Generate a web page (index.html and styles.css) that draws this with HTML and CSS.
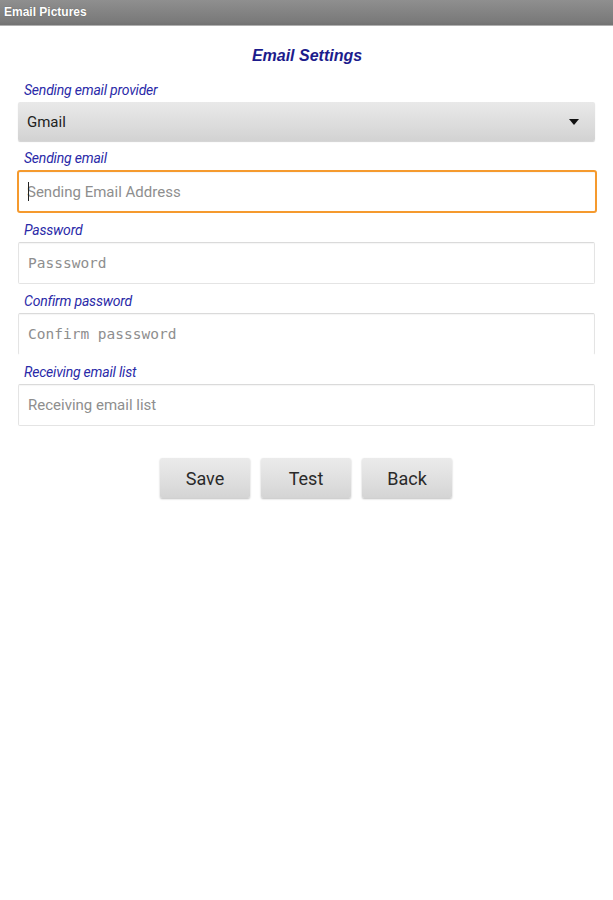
FILE: index.html
```html
<!DOCTYPE html>
<html>
<head>
<meta charset="utf-8">
<title>Email Pictures</title>
<link rel="stylesheet" href="styles.css">
</head>
<body>
<div class="titlebar">Email Pictures</div>
<main class="form">
  <h1 class="heading">Email Settings</h1>

  <div class="field">
    <div class="label">Sending email provider</div>
    <div class="spinner">
      <span class="spinner-text">Gmail</span>
      <svg class="arrow" width="10" height="6" viewBox="0 0 10 6"><path d="M0 0 H10 L5 6 Z" fill="#111"/></svg>
    </div>
  </div>

  <div class="field">
    <div class="label">Sending email</div>
    <div class="input focused">
      <span class="caret"></span>
      <span class="placeholder">Sending Email Address</span>
    </div>
  </div>

  <div class="field">
    <div class="label">Password</div>
    <div class="input"><span class="placeholder mono">Passsword</span></div>
  </div>

  <div class="field">
    <div class="label">Confirm password</div>
    <div class="input open-bottom"><span class="placeholder mono">Confirm passsword</span></div>
  </div>

  <div class="field">
    <div class="label">Receiving email list</div>
    <div class="input"><span class="placeholder">Receiving email list</span></div>
  </div>

  <div class="buttons">
    <button class="btn">Save</button>
    <button class="btn">Test</button>
    <button class="btn">Back</button>
  </div>
</main>
</body>
</html>
```
FILE: styles.css
```css
* { box-sizing: border-box; }
html, body { margin: 0; padding: 0; background: #fff; }
body { width: 613px; height: 900px; font-family: Roboto, "Liberation Sans", sans-serif; }

.titlebar {
  height: 26px;
  background: linear-gradient(#8f8f8f, #7a7a7a 85%, #727272);
  border-bottom: 1px solid #b0b0b0;
  color: #fff;
  font-family: "Liberation Sans", Arial, sans-serif;
  font-weight: bold;
  font-size: 12px;
  line-height: 25px;
  padding-left: 4px;
  text-shadow: 0 0 1px #555;
}

.form {
  padding: 0 16px 0 17px;
  display: flex;
  flex-direction: column;
}

.heading {
  margin: 20px 0 0 0;
  text-align: center;
  font-family: "Liberation Sans", Arial, sans-serif;
  font-weight: bold;
  font-style: italic;
  font-size: 16px;
  line-height: 20px;
  color: #1c1c8c;
}

.field { display: flex; flex-direction: column; }

.label {
  font-style: italic;
  font-size: 14px;
  line-height: 18px;
  color: #2a2aa8;
  padding-left: 7px;
  margin: 8px 0 3px 0;
  letter-spacing: -0.2px;
}
.heading + .field .label { margin-top: 15px; }

.spinner {
  height: 39px;
  margin: 0 2px 0 1px;
  background: linear-gradient(#e9e9e9, #dcdcdc 60%, #d2d2d2);
  border-radius: 2px;
  box-shadow: 0 1px 1px rgba(0,0,0,0.18);
  display: flex;
  align-items: center;
  justify-content: space-between;
  padding: 0 16px 0 9px;
}
.spinner-text { font-size: 15px; color: #222; }
.arrow { display: block; }

.input {
  height: 42px;
  border: 1px solid #e4e4e4;
  border-top-color: #dadada;
  border-radius: 2px;
  background: #fff;
  display: flex;
  align-items: center;
  padding-left: 9px;
  margin: 0 2px 0 1px;
  position: relative;
  box-shadow: inset 0 1px 1px rgba(0,0,0,0.04);
}
.input.open-bottom { border-bottom-color: transparent; }
.input.focused {
  height: 43px;
  border: 2px solid #f59a2e;
  border-radius: 3px;
  margin: 0 0 0 0;
  padding-left: 8px;
}

.placeholder { font-size: 15px; color: #8e8e8e; }
.placeholder.mono {
  font-family: "DejaVu Sans Mono", "Liberation Mono", monospace;
  font-size: 14.5px;
  color: #8e8e8e;
}

.caret {
  position: absolute;
  left: 9px;
  top: 10px;
  width: 1px;
  height: 19px;
  background: #222;
}

.buttons {
  display: flex;
  justify-content: center;
  gap: 11px;
  margin-top: 32px;
  padding-right: 2px;
}

.btn {
  width: 90px;
  height: 40px;
  border: none;
  border-radius: 2px;
  background: linear-gradient(#ebebeb, #dedede 60%, #d4d4d4);
  box-shadow: 0 1px 2px rgba(0,0,0,0.25);
  font-family: Roboto, "Liberation Sans", sans-serif;
  font-size: 18px;
  color: #2a2a2a;
  padding: 0;
}
```
